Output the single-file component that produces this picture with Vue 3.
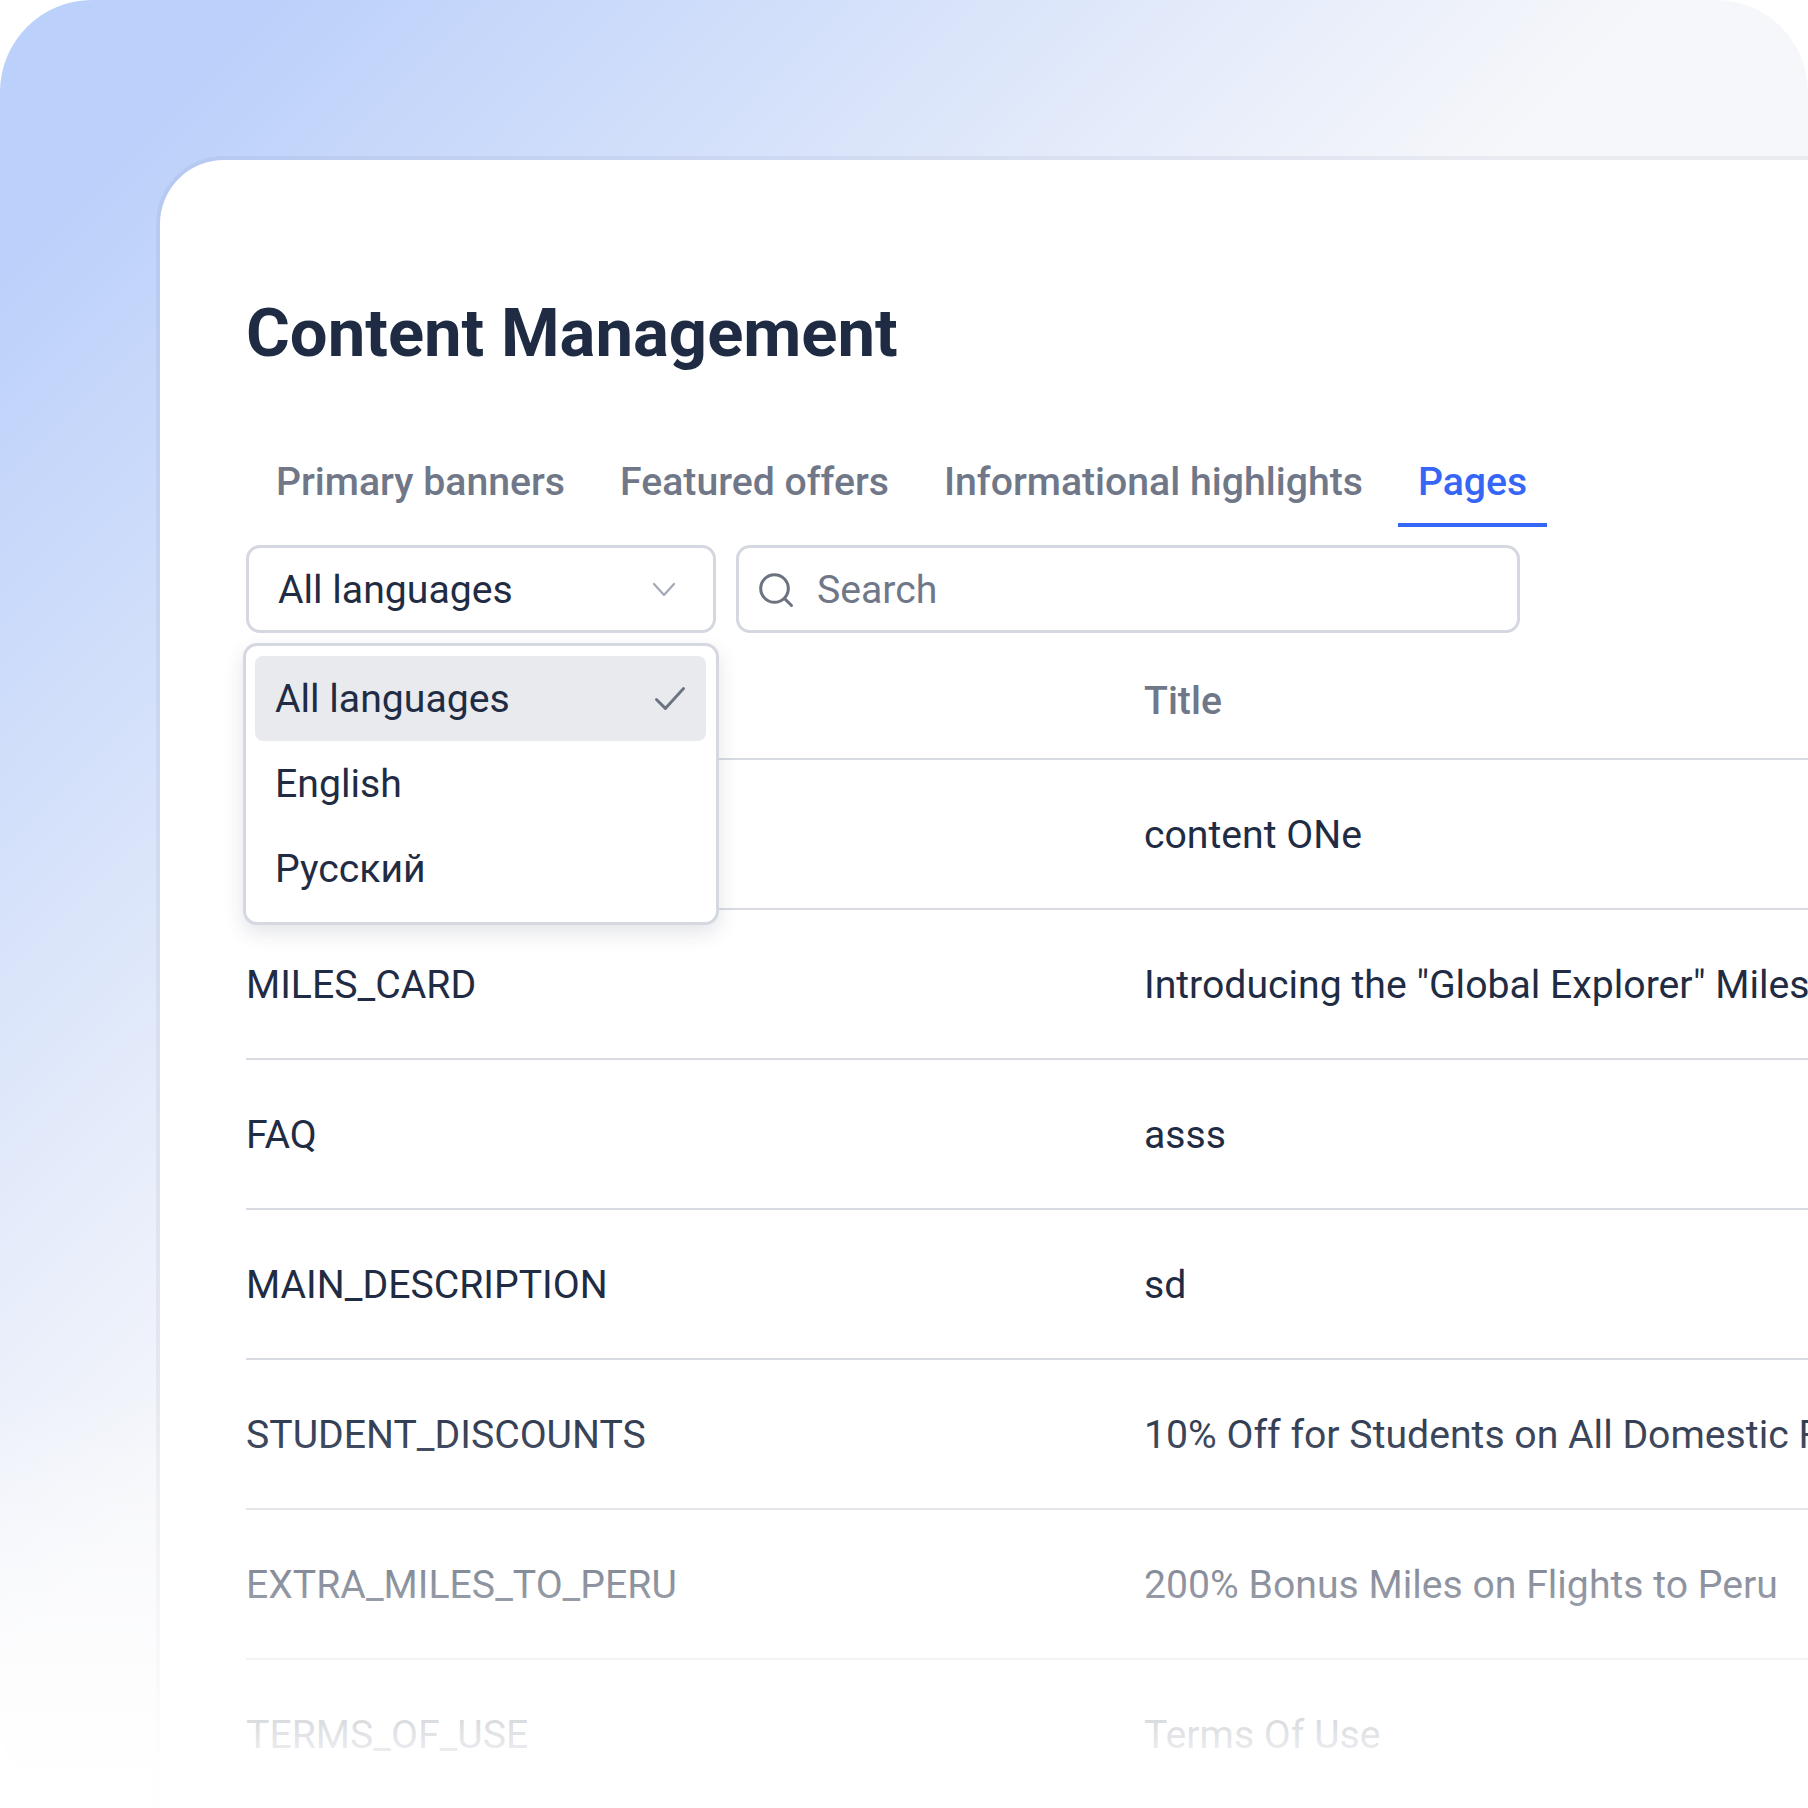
<script setup>
const tabs = [
  { label: 'Primary banners' },
  { label: 'Featured offers' },
  { label: 'Informational highlights' },
  { label: 'Pages', active: true }
]
const rows = [
  { key: '', title: 'content ONe' },
  { key: 'MILES_CARD', title: 'Introducing the "Global Explorer" Miles Card' },
  { key: 'FAQ', title: 'asss' },
  { key: 'MAIN_DESCRIPTION', title: 'sd' },
  { key: 'STUDENT_DISCOUNTS', title: '10% Off for Students on All Domestic Flights' },
  { key: 'EXTRA_MILES_TO_PERU', title: '200% Bonus Miles on Flights to Peru' },
  { key: 'TERMS_OF_USE', title: 'Terms Of Use' }
]
const options = [
  { label: 'All languages', selected: true },
  { label: 'English' },
  { label: 'Русский' }
]
</script>

<template>
  <div class="frame">
    <div class="card">
      <h1 class="heading">Content Management</h1>

      <nav class="tabs">
        <div v-for="t in tabs" :key="t.label" class="tab" :class="{ active: t.active }">{{ t.label }}</div>
      </nav>

      <div class="filters">
        <div class="select-wrap">
          <div class="select">
            <span>All languages</span>
            <svg class="chevron" viewBox="0 0 24 16" fill="none">
              <path d="M2 2 L12 13 L22 2" stroke="#a3a9b5" stroke-width="2.2" stroke-linecap="round" stroke-linejoin="round" />
            </svg>
          </div>
          <div class="menu">
            <div v-for="o in options" :key="o.label" class="option" :class="{ selected: o.selected }">
              <span>{{ o.label }}</span>
              <svg v-if="o.selected" class="check" viewBox="0 0 30 24" fill="none">
                <path d="M2 13 L10.5 21.5 L28 2.5" stroke="#6b7280" stroke-width="2.8" stroke-linecap="round" stroke-linejoin="round" />
              </svg>
            </div>
          </div>
        </div>
        <div class="search">
          <svg class="search-icon" viewBox="0 0 36 36" fill="none">
            <circle cx="16.5" cy="16.5" r="13.8" stroke="#6b7280" stroke-width="3" />
            <path d="M26.6 26.6 L33.5 33.5" stroke="#6b7280" stroke-width="3" stroke-linecap="round" />
          </svg>
          <span>Search</span>
        </div>
      </div>

      <div class="table">
        <div class="head">
          <div></div>
          <div class="head-title">Title</div>
        </div>
        <div v-for="(r, i) in rows" :key="i" class="row">
          <div class="cell">{{ r.key }}</div>
          <div class="cell">{{ r.title }}</div>
        </div>
      </div>
    </div>
    <div class="fade"></div>
  </div>
</template>

<style scoped>
.frame {
  position: relative;
  width: 1808px;
  height: 1808px;
  overflow: hidden;
  box-sizing: border-box;
  padding: 156px 0 0 156px;
  border-radius: 92px;
  background: linear-gradient(135deg, #bbd0fa 7%, #f6f7fa 46%);
  font-family: Roboto, "Noto Sans", sans-serif;
  color: #1f2c44;
}
.card {
  box-sizing: border-box;
  width: 1900px;
  min-height: 1800px;
  padding: 135px 0 0 86px;
  background: #fff;
  background-clip: padding-box;
  border-top: 4px solid rgba(50, 60, 110, 0.06);
  border-left: 4px solid rgba(50, 60, 110, 0.06);
  border-top-left-radius: 68px;
}
.heading {
  margin: 0;
  font-size: 67px;
  line-height: 76px;
  font-weight: 700;
  color: #1e2b42;
}
.tabs {
  display: flex;
  gap: 15px;
  margin: 88px 0 0 10px;
}
.tab {
  padding: 1px 20px 19px;
  font-size: 39.2px;
  line-height: 44px;
  font-weight: 500;
  color: #6f7788;
  border-bottom: 4px solid transparent;
}
.tab.active {
  color: #3566f5;
  border-bottom-color: #3566f5;
}
.filters {
  display: flex;
  gap: 20px;
  margin-top: 18px;
}
.select-wrap {
  position: relative;
  width: 470px;
}
.select,
.search {
  box-sizing: border-box;
  height: 88px;
  display: flex;
  align-items: center;
  border: 3px solid #d5d8e0;
  border-radius: 14px;
  font-size: 39.2px;
  background: #fff;
  padding-top: 2px;
}
.select {
  justify-content: space-between;
  padding-right: 37px;
  padding-left: 29px;
}
.chevron {
  width: 24px;
  height: 16px;
}
.search {
  width: 784px;
  padding-left: 19px;
  gap: 23px;
  color: #6f7788;
}
.search-icon {
  width: 36px;
  height: 36px;
}
.menu {
  position: absolute;
  top: 98px;
  left: -3px;
  box-sizing: border-box;
  width: 476px;
  height: 282px;
  padding: 10px 10px 11px 9px;
  background: #fff;
  border: 3px solid #d5d8e0;
  border-radius: 14px;
  box-shadow: 0 8px 20px rgba(30, 45, 80, 0.12);
  z-index: 2;
}
.option {
  height: 85px;
  display: flex;
  align-items: center;
  justify-content: space-between;
  padding: 0 20px;
  font-size: 39.2px;
  border-radius: 8px;
}
.option.selected {
  background: #e9eaee;
}
.check {
  width: 32px;
  height: 25px;
}
.table {
  margin-top: 9px;
}
.head {
  display: grid;
  grid-template-columns: 898px 1fr;
  align-items: center;
  height: 118px;
  box-sizing: border-box;
  border-bottom: 2.5px solid #d8dbe2;
  padding-top: 2px;
}
.head-title {
  font-size: 39.2px;
  font-weight: 500;
  color: #6f7788;
}
.row {
  display: grid;
  grid-template-columns: 898px 1fr;
  align-items: center;
  height: 150px;
  box-sizing: border-box;
  border-bottom: 2.5px solid #d8dbe2;
  font-size: 39.2px;
  padding-top: 1px;
}
.cell {
  white-space: nowrap;
}
.fade {
  position: absolute;
  left: 0;
  right: 0;
  bottom: 0;
  height: 420px;
  background: linear-gradient(to bottom, rgba(255, 255, 255, 0), rgba(255, 255, 255, 0.97) 92%);
  pointer-events: none;
}
</style>
